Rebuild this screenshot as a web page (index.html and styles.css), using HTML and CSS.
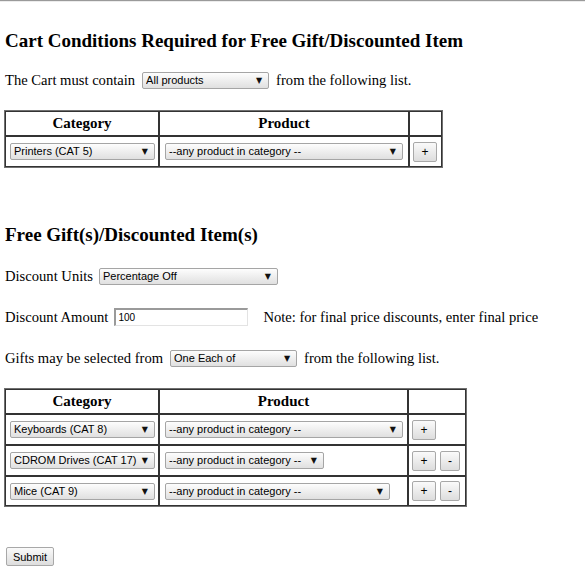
FILE: index.html
```html
<!DOCTYPE html>
<html>
<head>
<meta charset="utf-8">
<title>Free Gift / Discounted Item</title>
<link rel="stylesheet" href="styles.css">
</head>
<body>
<div class="topline"></div>
<main class="page">
  <h3 class="title t1">Cart Conditions Required for Free Gift/Discounted Item</h3>
  <div class="row r-cart">
    <span>The Cart must contain</span>
    <span class="sel w-all"><select><option>All products</option></select></span>
    <span>from the following list.</span>
  </div>

  <table class="grid g1">
    <tr class="head"><th class="c1">Category</th><th class="c2">Product</th><th class="c3"></th></tr>
    <tr>
      <td><span class="sel w-cat"><select><option>Printers (CAT 5)</option></select></span></td>
      <td><span class="sel w-prod1"><select><option>--any product in category --</option></select></span></td>
      <td><div class="btns"><button class="btn plus">+</button></div></td>
    </tr>
  </table>

  <h3 class="title t2">Free Gift(s)/Discounted Item(s)</h3>
  <div class="row r-units">
    <span>Discount Units</span>
    <span class="sel w-units"><select><option>Percentage Off</option></select></span>
  </div>
  <div class="row r-amount">
    <span>Discount Amount</span>
    <input class="amount" type="text" value="100">
    <span class="note">Note: for final price discounts, enter final price</span>
  </div>
  <div class="row r-gifts">
    <span>Gifts may be selected from</span>
    <span class="sel w-each"><select><option>One Each of</option></select></span>
    <span>from the following list.</span>
  </div>

  <table class="grid g2">
    <tr class="head"><th class="c1">Category</th><th class="c2">Product</th><th class="c3"></th></tr>
    <tr>
      <td><span class="sel w-cat"><select><option>Keyboards (CAT 8)</option></select></span></td>
      <td><span class="sel w-prod1"><select><option>--any product in category --</option></select></span></td>
      <td><div class="btns"><button class="btn plus">+</button></div></td>
    </tr>
    <tr>
      <td><span class="sel w-cat"><select><option>CDROM Drives (CAT 17)</option></select></span></td>
      <td><span class="sel w-prod2"><select><option>--any product in category --</option></select></span></td>
      <td><div class="btns"><button class="btn plus">+</button><button class="btn minus">-</button></div></td>
    </tr>
    <tr class="short">
      <td><span class="sel w-cat"><select><option>Mice (CAT 9)</option></select></span></td>
      <td><span class="sel w-prod3"><select><option>--any product in category --</option></select></span></td>
      <td><div class="btns"><button class="btn plus">+</button><button class="btn minus">-</button></div></td>
    </tr>
  </table>

  <div class="submit-row"><button class="btn submit">Submit</button></div>
</main>
</body>
</html>
```

FILE: styles.css
```css
html, body {
  margin: 0;
  padding: 0;
  background: #ffffff;
  color: #000000;
}

body {
  font-family: "Liberation Serif", "Times New Roman", serif;
  font-size: 14.6px;
}

.topline {
  height: 0;
  border-top: 1px solid #9a9a9a;
  border-bottom: 1px solid #ececec;
}

.page {
  display: flex;
  flex-direction: column;
  align-items: flex-start;
  padding: 0 4px;
}

.title {
  margin: 0;
  padding-left: 1px;
  font-size: 19px;
  font-weight: bold;
  line-height: 22px;
}

.t1 { margin-top: 28px; }
.t2 { margin-top: 56px; }

.row {
  display: flex;
  align-items: center;
  gap: 6px;
  height: 20px;
  padding-left: 1px;
  white-space: nowrap;
}

.r-cart { margin-top: 18px; gap: 7px; }
.r-units { margin-top: 20px; }
.r-amount { margin-top: 21px; }
.r-gifts { margin-top: 21px; gap: 7px; }

.note { margin-left: 9px; }

/* select look */
.sel {
  position: relative;
  display: inline-block;
  height: 17px;
  vertical-align: middle;
}

.sel select {
  appearance: none;
  -webkit-appearance: none;
  box-sizing: border-box;
  display: block;
  width: 100%;
  height: 17px;
  margin: 0;
  padding: 0 16px 0 3px;
  border: 1px solid #a5a5a5;
  border-radius: 2px;
  background: linear-gradient(#fdfdfd, #e0e0e0);
  color: #000;
  font-family: "Liberation Sans", Arial, sans-serif;
  font-size: 11px;
  line-height: 15px;
}

.sel::after {
  content: "\25BC";
  position: absolute;
  right: 7px;
  top: 4px;
  font-family: "DejaVu Sans", sans-serif;
  font-size: 8px;
  line-height: 9px;
  color: #111;
  pointer-events: none;
}

.w-all { width: 127px; }
.w-cat { width: 145px; }
.w-prod1 { width: 238px; }
.w-prod2 { width: 159px; }
.w-prod3 { width: 225px; }
.w-units { width: 179px; }
.w-each { width: 127px; }

.amount {
  box-sizing: border-box;
  width: 134px;
  height: 18px;
  margin: 0;
  padding: 0 2px;
  border: 1px solid;
  border-color: #9a9a9a #e3e3e3 #e3e3e3 #9a9a9a;
  border-width: 2px 1px 1px 2px;
  font-family: "Liberation Sans", Arial, sans-serif;
  font-size: 10px;
  color: #000;
  background: #fff;
}

/* tables */
.grid {
  box-sizing: border-box;
  table-layout: fixed;
  border-collapse: separate;
  border-spacing: 0;
  border: 1px solid #707070;
  margin-top: 20px;
}

.g1 { width: 439px; }
.g2 { width: 463px; }

.grid th,
.grid td {
  box-sizing: border-box;
  border: 1px solid #333333;
  padding: 0 4px;
  vertical-align: middle;
}

.grid th {
  height: 25px;
  font-size: 15px;
  font-weight: bold;
  text-align: center;
}

.grid td {
  height: 31px;
  text-align: left;
}

.grid .short td { height: 30px; }

.grid td .sel { display: block; }

.g1 .c1 { width: 154px; }
.g1 .c2 { width: 250px; }
.g1 .c3 { width: 33px; }

.g2 .c1 { width: 154px; }
.g2 .c2 { width: 249px; }
.g2 .c3 { width: 58px; }

.grid td:first-child { padding-left: 4px; }
.grid td:nth-child(2) { padding-left: 5px; }
.grid td:nth-child(3) { padding-left: 3px; }

.btns {
  display: flex;
  gap: 4px;
}

/* buttons */
.btn {
  box-sizing: border-box;
  margin: 0;
  padding: 0;
  border: 1px solid #a8a8a8;
  border-radius: 2px;
  background: linear-gradient(#fafafa, #dddddd);
  color: #000;
  font-family: "Liberation Sans", Arial, sans-serif;
  font-size: 12px;
  line-height: 16px;
}

.plus { width: 24px; height: 20px; }
.minus { width: 20px; height: 20px; }

.submit-row {
  margin-top: 40px;
  padding-left: 2px;
}

.submit {
  width: 48px;
  height: 19px;
  font-size: 11px;
}
```
